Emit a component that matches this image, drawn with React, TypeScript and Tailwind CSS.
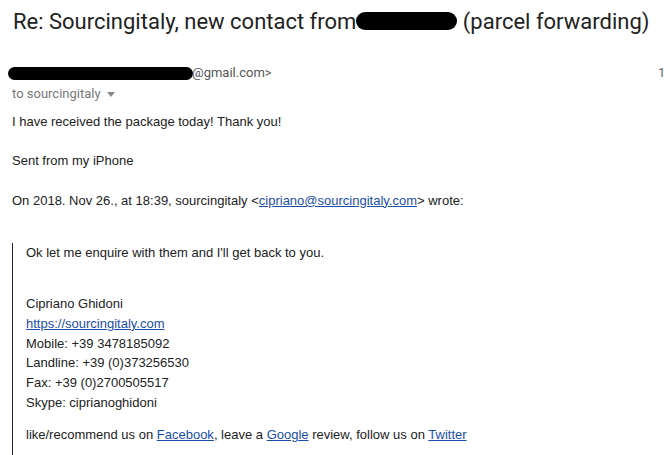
import React from "react";

const roboto = { fontFamily: "Roboto, 'Liberation Sans', Arial, sans-serif" };

function Blot({ className }: { className: string }) {
  return <span className={`inline-block bg-black rounded-full align-middle ${className}`} />;
}

function A({ children }: { children: React.ReactNode }) {
  return <a className="text-[#1a4ea8] underline underline-offset-1">{children}</a>;
}

export default function App() {
  return (
    <div className="w-[664px] h-[455px] overflow-hidden bg-white text-[#222]">
      {/* Subject */}
      <h1
        className="pt-[8px] pl-[13px] text-[22px] leading-[28px] whitespace-nowrap text-[#222]"
        style={roboto}
      >
        Re: Sourcingitaly, new contact from
        <Blot className="w-[101px] h-[18px] -mt-[4px]" /> (parcel forwarding)
      </h1>

      {/* Sender */}
      <div className="mt-[29px] pl-[8px] flex whitespace-nowrap text-[13px] leading-[16px] text-[#555]" style={roboto}>
        <div className="w-[650px] shrink-0 flex items-center">
          <Blot className="w-[185px] h-[13px]" />
          <span className="-ml-px">@gmail.com&gt;</span>
        </div>
        <span className="text-[#666]">10:42 AM (1 hour ago)</span>
      </div>
      <div className="mt-[5px] pl-[12px] flex items-center gap-[6px] text-[13px] leading-[16px] text-[#777]" style={roboto}>
        to sourcingitaly
        <svg width="8" height="5" viewBox="0 0 8 5" className="mt-px">
          <path d="M0 0h8L4 5z" fill="#888" />
        </svg>
      </div>

      {/* Body */}
      <div className="mt-[10px] pl-[12px] text-[13px] leading-[19.7px] font-['Liberation_Sans',Arial,sans-serif] text-[#222]">
        <p>I have received the package today! Thank you!</p>
        <p className="mt-[19.7px]">Sent from my iPhone</p>
        <p className="mt-[19.7px] whitespace-nowrap">
          On 2018. Nov 26., at 18:39, sourcingitaly &lt;<A>cipriano@sourcingitaly.com</A>&gt; wrote:
        </p>

        <blockquote className="mt-[33px] border-l border-[#1c1c6b] pl-[13px] pb-[40px]">
          <p>Ok let me enquire with them and I'll get back to you.</p>
          <div className="mt-[31px]">
            <p>Cipriano Ghidoni</p>
            <p><A>https://sourcingitaly.com</A></p>
            <p>Mobile: +39 3478185092</p>
            <p>Landline: +39 (0)373256530</p>
            <p>Fax: +39 (0)2700505517</p>
            <p>Skype: ciprianoghidoni</p>
          </div>
          <p className="mt-[13px] whitespace-nowrap">
            like/recommend us on <A>Facebook</A>, leave a <A>Google</A> review, follow us on <A>Twitter</A>
          </p>
        </blockquote>
      </div>
    </div>
  );
}
